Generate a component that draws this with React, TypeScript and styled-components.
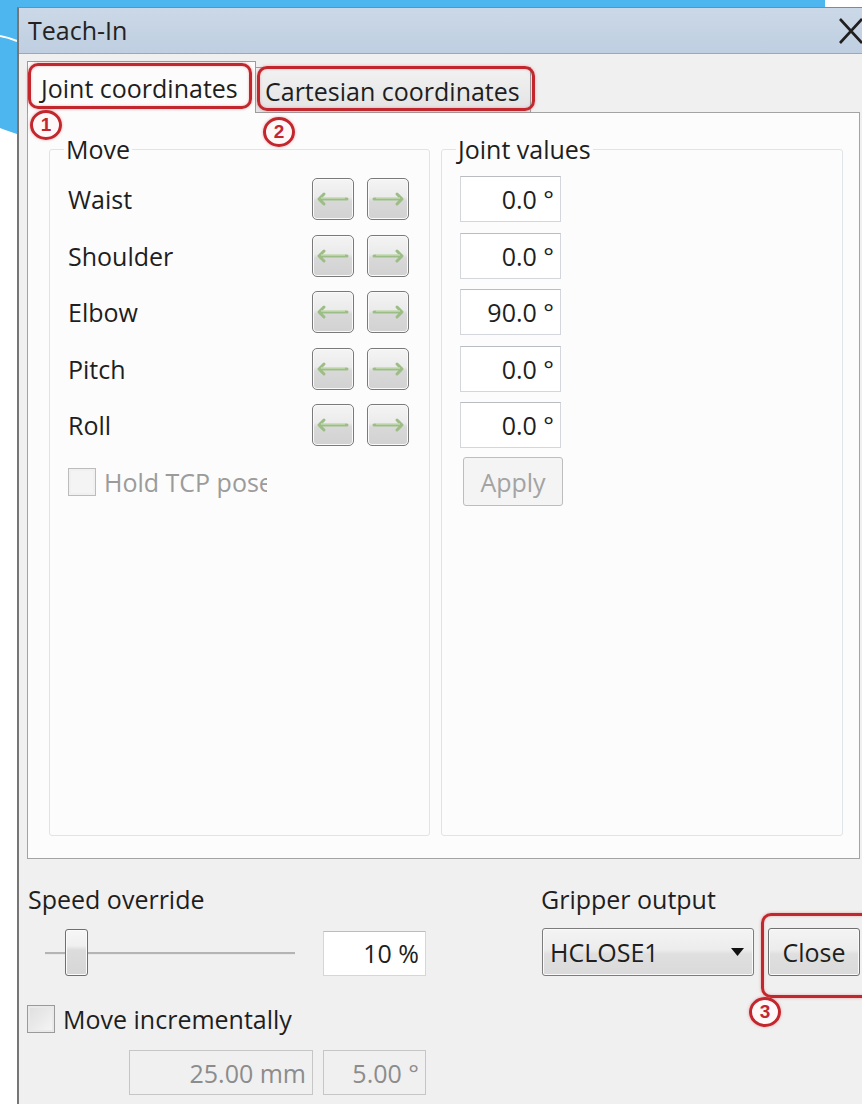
import styled, { createGlobalStyle } from "styled-components";

const GlobalStyle = createGlobalStyle`
  html, body {
    margin: 0;
    padding: 0;
  }
  body {
    font-family: "Open Sans", "Noto Sans", sans-serif;
    color: #1e1e1e;
  }
`;

const RED = "#c1272d";

const Page = styled.div`
  position: relative;
  width: 862px;
  height: 1104px;
  overflow: hidden;
  background: #fff;
  padding: 7px 0 0 17px;
  box-sizing: border-box;
`;

const Backdrop = styled.svg`
  position: absolute;
  left: 0;
  top: 0;
`;

const Dialog = styled.div`
  position: relative;
  width: 860px;
  height: 1110px;
  box-sizing: border-box;
  background: #f0f0f0;
  border-left: 2px solid #767676;
  border-top: 1px solid #7d8a99;
  display: flex;
  flex-direction: column;
  font-size: 25px;
`;

const TitleBar = styled.div`
  height: 45px;
  flex: none;
  display: flex;
  align-items: center;
  padding-left: 9px;
  background: linear-gradient(to bottom, #cbd8e7, #bfcfe1);
  border-bottom: 1px solid #98a9bc;
`;

const Title = styled.span`
  color: #222;
  line-height: 1;
`;

const CloseGlyph = styled.svg`
  margin-left: auto;
  margin-right: 13px;
`;

const TabBar = styled.div`
  height: 59px;
  flex: none;
  display: flex;
  align-items: flex-end;
  padding-left: 8px;
  margin-bottom: -1px;
  position: relative;
  z-index: 1;
`;

const Tab = styled.div<{ $active?: boolean }>`
  box-sizing: border-box;
  height: ${(p) => (p.$active ? "52px" : "46px")};
  width: ${(p) => (p.$active ? "229px" : "275px")};
  padding: ${(p) => (p.$active ? "10px 0 0 13px" : "7px 0 0 9px")};
  line-height: 32px;
  white-space: nowrap;
  border: 1px solid #9c9c9c;
  border-bottom: ${(p) => (p.$active ? "none" : "1px solid #9c9c9c")};
  border-left: ${(p) => (p.$active ? "1px solid #9c9c9c" : "none")};
  background: ${(p) =>
    p.$active ? "#fcfcfc" : "linear-gradient(to bottom, #f2f2f2, #e3e3e3)"};
`;

const Pane = styled.div`
  flex: none;
  height: 747px;
  margin: 0 17px 0 8px;
  box-sizing: border-box;
  border: 1px solid #a3a3a3;
  background: #fcfcfc;
  display: grid;
  grid-template-columns: 381px 402px;
  column-gap: 11px;
  padding: 20px 16px 22px 21px;
`;

const Group = styled.fieldset<{ $right?: number }>`
  margin: 0;
  min-width: 0;
  border: 1px solid #dfe4e8;
  border-radius: 3px;
  padding: 0 ${(p) => p.$right ?? 20}px 0 18px;
`;

const Legend = styled.legend`
  line-height: 32px;
  padding: 0 2px;
  margin-left: -4px;
`;

const Rows = styled.div`
  margin-top: 6px;
`;

const Row = styled.div`
  height: 56.5px;
  display: flex;
  align-items: center;
  gap: 13px;
`;

const RowLabel = styled.span`
  flex: 1;
`;

const ArrowButton = styled.div`
  width: 42px;
  height: 42px;
  box-sizing: border-box;
  border: 1px solid #7a7a7a;
  border-radius: 5px;
  background: linear-gradient(to bottom, #f4f4f4 0%, #ebebeb 45%, #d8d8d8 55%, #d2d2d2 100%);
  box-shadow: inset 0 0 0 1px #fafafa;
  display: flex;
  align-items: center;
  justify-content: center;
`;

const CheckBox = styled.div<{ $disabled?: boolean }>`
  width: 28px;
  height: 28px;
  flex: none;
  box-sizing: border-box;
  border: 1px solid ${(p) => (p.$disabled ? "#bcbcbc" : "#9a9a9a")};
  background: ${(p) =>
    p.$disabled
      ? "#f4f4f4"
      : "linear-gradient(135deg, #dedede, #f6f6f6)"};
  box-shadow: inset 0 0 0 2px ${(p) => (p.$disabled ? "#f0f0f0" : "#e9e9e9")};
`;

const CheckRow = styled.div`
  display: flex;
  align-items: center;
  gap: 8px;
`;

const MutedText = styled.span`
  color: #9b9b9b;
  width: 163px;
  overflow: hidden;
  white-space: nowrap;
`;

const ValueBox = styled.div<{ $w?: number; $h?: number; $disabled?: boolean }>`
  width: ${(p) => p.$w ?? 101}px;
  height: ${(p) => p.$h ?? 46}px;
  box-sizing: border-box;
  border: 1px solid ${(p) => (p.$disabled ? "#c6c6c6" : "#d3d6da")};
  border-top-color: ${(p) => (p.$disabled ? "#c6c6c6" : "#b9bcc0")};
  background: ${(p) => (p.$disabled ? "#f0f0f0" : "#fff")};
  color: ${(p) => (p.$disabled ? "#8c8c8c" : "#1e1e1e")};
  display: flex;
  align-items: center;
  justify-content: flex-end;
  padding-right: 6px;
  white-space: nowrap;
`;

const ApplyButton = styled.div`
  width: 100px;
  height: 49px;
  margin-left: 3px;
  box-sizing: border-box;
  border: 1px solid #bdbdbd;
  border-radius: 3px;
  background: #f4f4f4;
  color: #a3a3a3;
  display: flex;
  align-items: center;
  justify-content: center;
`;

const Footer = styled.div`
  display: grid;
  grid-template-columns: 398px 1fr;
  column-gap: 115px;
  padding: 24px 0 0 9px;
`;

const Column = styled.div`
  display: flex;
  flex-direction: column;
`;

const FieldLabel = styled.div`
  line-height: 32px;
  white-space: nowrap;
`;

const SliderRow = styled.div`
  margin-top: 14px;
  height: 48px;
  display: flex;
  align-items: center;
  gap: 11px;
`;

const Slider = styled.div`
  position: relative;
  width: 284px;
  height: 48px;
  display: flex;
  align-items: center;
`;

const Track = styled.div`
  margin-left: 17px;
  width: 250px;
  height: 2px;
  background: #b4b4b4;
  border-bottom: 1px solid #e9e9e9;
`;

const Handle = styled.div`
  position: absolute;
  left: 37px;
  top: 0;
  width: 23px;
  height: 47px;
  box-sizing: border-box;
  border: 1px solid #6f6f6f;
  border-radius: 3px;
  background: linear-gradient(to bottom, #f6f6f6 0%, #f0f0f0 35%, #dcdcdc 45%, #d6d6d6 100%);
  box-shadow: inset 0 0 0 1px #fbfbfb;
`;

const IncRow = styled(CheckRow)`
  margin-top: 25px;
  margin-left: -1px;
`;

const InputsRow = styled.div`
  margin-top: 14px;
  padding-left: 101px;
  display: flex;
  gap: 10px;
`;

const ComboRow = styled.div`
  margin-top: 13px;
  display: flex;
  gap: 14px;
  padding-left: 1px;
`;

const Combo = styled.div`
  width: 212px;
  height: 48px;
  box-sizing: border-box;
  border: 1px solid #7c7c7c;
  border-radius: 3px;
  background: linear-gradient(to bottom, #f4f4f4 0%, #ececec 45%, #dfdfdf 55%, #dadada 100%);
  box-shadow: inset 0 0 0 1px #fafafa;
  display: flex;
  align-items: center;
  padding: 0 9px 0 7px;
`;

const ComboText = styled.span`
  flex: 1;
`;

const PushButton = styled.div`
  width: 92px;
  height: 48px;
  box-sizing: border-box;
  border: 1px solid #707070;
  border-radius: 3px;
  background: linear-gradient(to bottom, #f4f4f4 0%, #ececec 45%, #dfdfdf 55%, #dadada 100%);
  box-shadow: inset 0 0 0 1px #fafafa;
  display: flex;
  align-items: center;
  justify-content: center;
`;

/* red call-outs drawn over the dialog */
const Marker = styled.div<{ $x: number; $y: number; $w: number; $h: number }>`
  position: absolute;
  z-index: 5;
  left: ${(p) => p.$x}px;
  top: ${(p) => p.$y}px;
  width: ${(p) => p.$w}px;
  height: ${(p) => p.$h}px;
  box-sizing: border-box;
  border: 3px solid ${RED};
  border-radius: 10px;
  box-shadow: 0 0 3px rgba(215, 80, 90, 0.5), inset 0 0 3px rgba(215, 80, 90, 0.4);
`;

const Badge = styled.div<{ $x: number; $y: number }>`
  position: absolute;
  z-index: 6;
  left: ${(p) => p.$x - 16}px;
  top: ${(p) => p.$y - 15}px;
  width: 32px;
  height: 30px;
  box-sizing: border-box;
  border: 3.5px solid ${RED};
  border-radius: 50%;
  background: rgba(255, 248, 248, 0.95);
  color: ${RED};
  font-family: "Liberation Sans", Arial, sans-serif;
  font-weight: bold;
  font-size: 19px;
  line-height: 23px;
  text-align: center;
  box-shadow: 0 0 3px rgba(215, 80, 90, 0.5);
`;

function Arrow({ dir }: { dir: "left" | "right" }) {
  const d = dir === "left" ? "M6 11 H34 M11 6 L6 11 L11 16" : "M6 11 H34 M29 6 L34 11 L29 16";
  return (
    <svg width="40" height="22" viewBox="0 0 40 22">
      <path d={d} fill="none" stroke="#9dbd86" strokeWidth="3" strokeLinecap="round" strokeLinejoin="round" />
      <path d="M8 10 H32" stroke="#d5e8c6" strokeWidth="1" />
    </svg>
  );
}

const joints = [
  { name: "Waist", value: "0.0 °" },
  { name: "Shoulder", value: "0.0 °" },
  { name: "Elbow", value: "90.0 °" },
  { name: "Pitch", value: "0.0 °" },
  { name: "Roll", value: "0.0 °" },
];

export default function App() {
  return (
    <>
      <GlobalStyle />
      <Page>
        <Backdrop width="862" height="140" viewBox="0 0 862 140">
          <path d="M0 0 H825 V12 H17 V134 C11 132 5 130 0 128 Z" fill="#4db6ee" />
          <path d="M0 36 C6 37 12 39 17 41" fill="none" stroke="#ffffff" strokeWidth="2" />
        </Backdrop>
        <Dialog>
          <TitleBar>
            <Title>Teach-In</Title>
            <CloseGlyph width="26" height="28" viewBox="0 0 26 28">
              <path d="M2 2 L24 26 M24 2 L2 26" stroke="#1f1f1f" strokeWidth="2.6" />
            </CloseGlyph>
          </TitleBar>
          <TabBar>
            <Tab $active>Joint coordinates</Tab>
            <Tab>Cartesian coordinates</Tab>
          </TabBar>
          <Pane>
            <Group>
              <Legend>Move</Legend>
              <Rows>
                {joints.map((j) => (
                  <Row key={j.name}>
                    <RowLabel>{j.name}</RowLabel>
                    <ArrowButton>
                      <Arrow dir="left" />
                    </ArrowButton>
                    <ArrowButton>
                      <Arrow dir="right" />
                    </ArrowButton>
                  </Row>
                ))}
                <Row>
                  <CheckRow>
                    <CheckBox $disabled />
                    <MutedText>Hold TCP pose</MutedText>
                  </CheckRow>
                </Row>
              </Rows>
            </Group>
            <Group $right={18}>
              <Legend>Joint values</Legend>
              <Rows>
                {joints.map((j) => (
                  <Row key={j.name}>
                    <ValueBox>{j.value}</ValueBox>
                  </Row>
                ))}
                <Row>
                  <ApplyButton>Apply</ApplyButton>
                </Row>
              </Rows>
            </Group>
          </Pane>
          <Footer>
            <Column>
              <FieldLabel>Speed override</FieldLabel>
              <SliderRow>
                <Slider>
                  <Track />
                  <Handle />
                </Slider>
                <ValueBox $w={103} $h={45}>10 %</ValueBox>
              </SliderRow>
              <IncRow>
                <CheckBox />
                <span>Move incrementally</span>
              </IncRow>
              <InputsRow>
                <ValueBox $w={184} $h={45} $disabled>25.00 mm</ValueBox>
                <ValueBox $w={103} $h={45} $disabled>5.00 °</ValueBox>
              </InputsRow>
            </Column>
            <Column>
              <FieldLabel>Gripper output</FieldLabel>
              <ComboRow>
                <Combo>
                  <ComboText>HCLOSE1</ComboText>
                  <svg width="13" height="8" viewBox="0 0 13 8">
                    <path d="M0 0 H13 L6.5 8 Z" fill="#111" />
                  </svg>
                </Combo>
                <PushButton>Close</PushButton>
              </ComboRow>
            </Column>
          </Footer>
        </Dialog>

        <Marker $x={28} $y={63} $w={224} $h={46} />
        <Marker $x={257} $y={66} $w={278} $h={45} />
        <Marker $x={761} $y={913} $w={112} $h={85} />
        <Badge $x={46} $y={125}>1</Badge>
        <Badge $x={279} $y={132}>2</Badge>
        <Badge $x={765} $y={1012}>3</Badge>
      </Page>
    </>
  );
}
